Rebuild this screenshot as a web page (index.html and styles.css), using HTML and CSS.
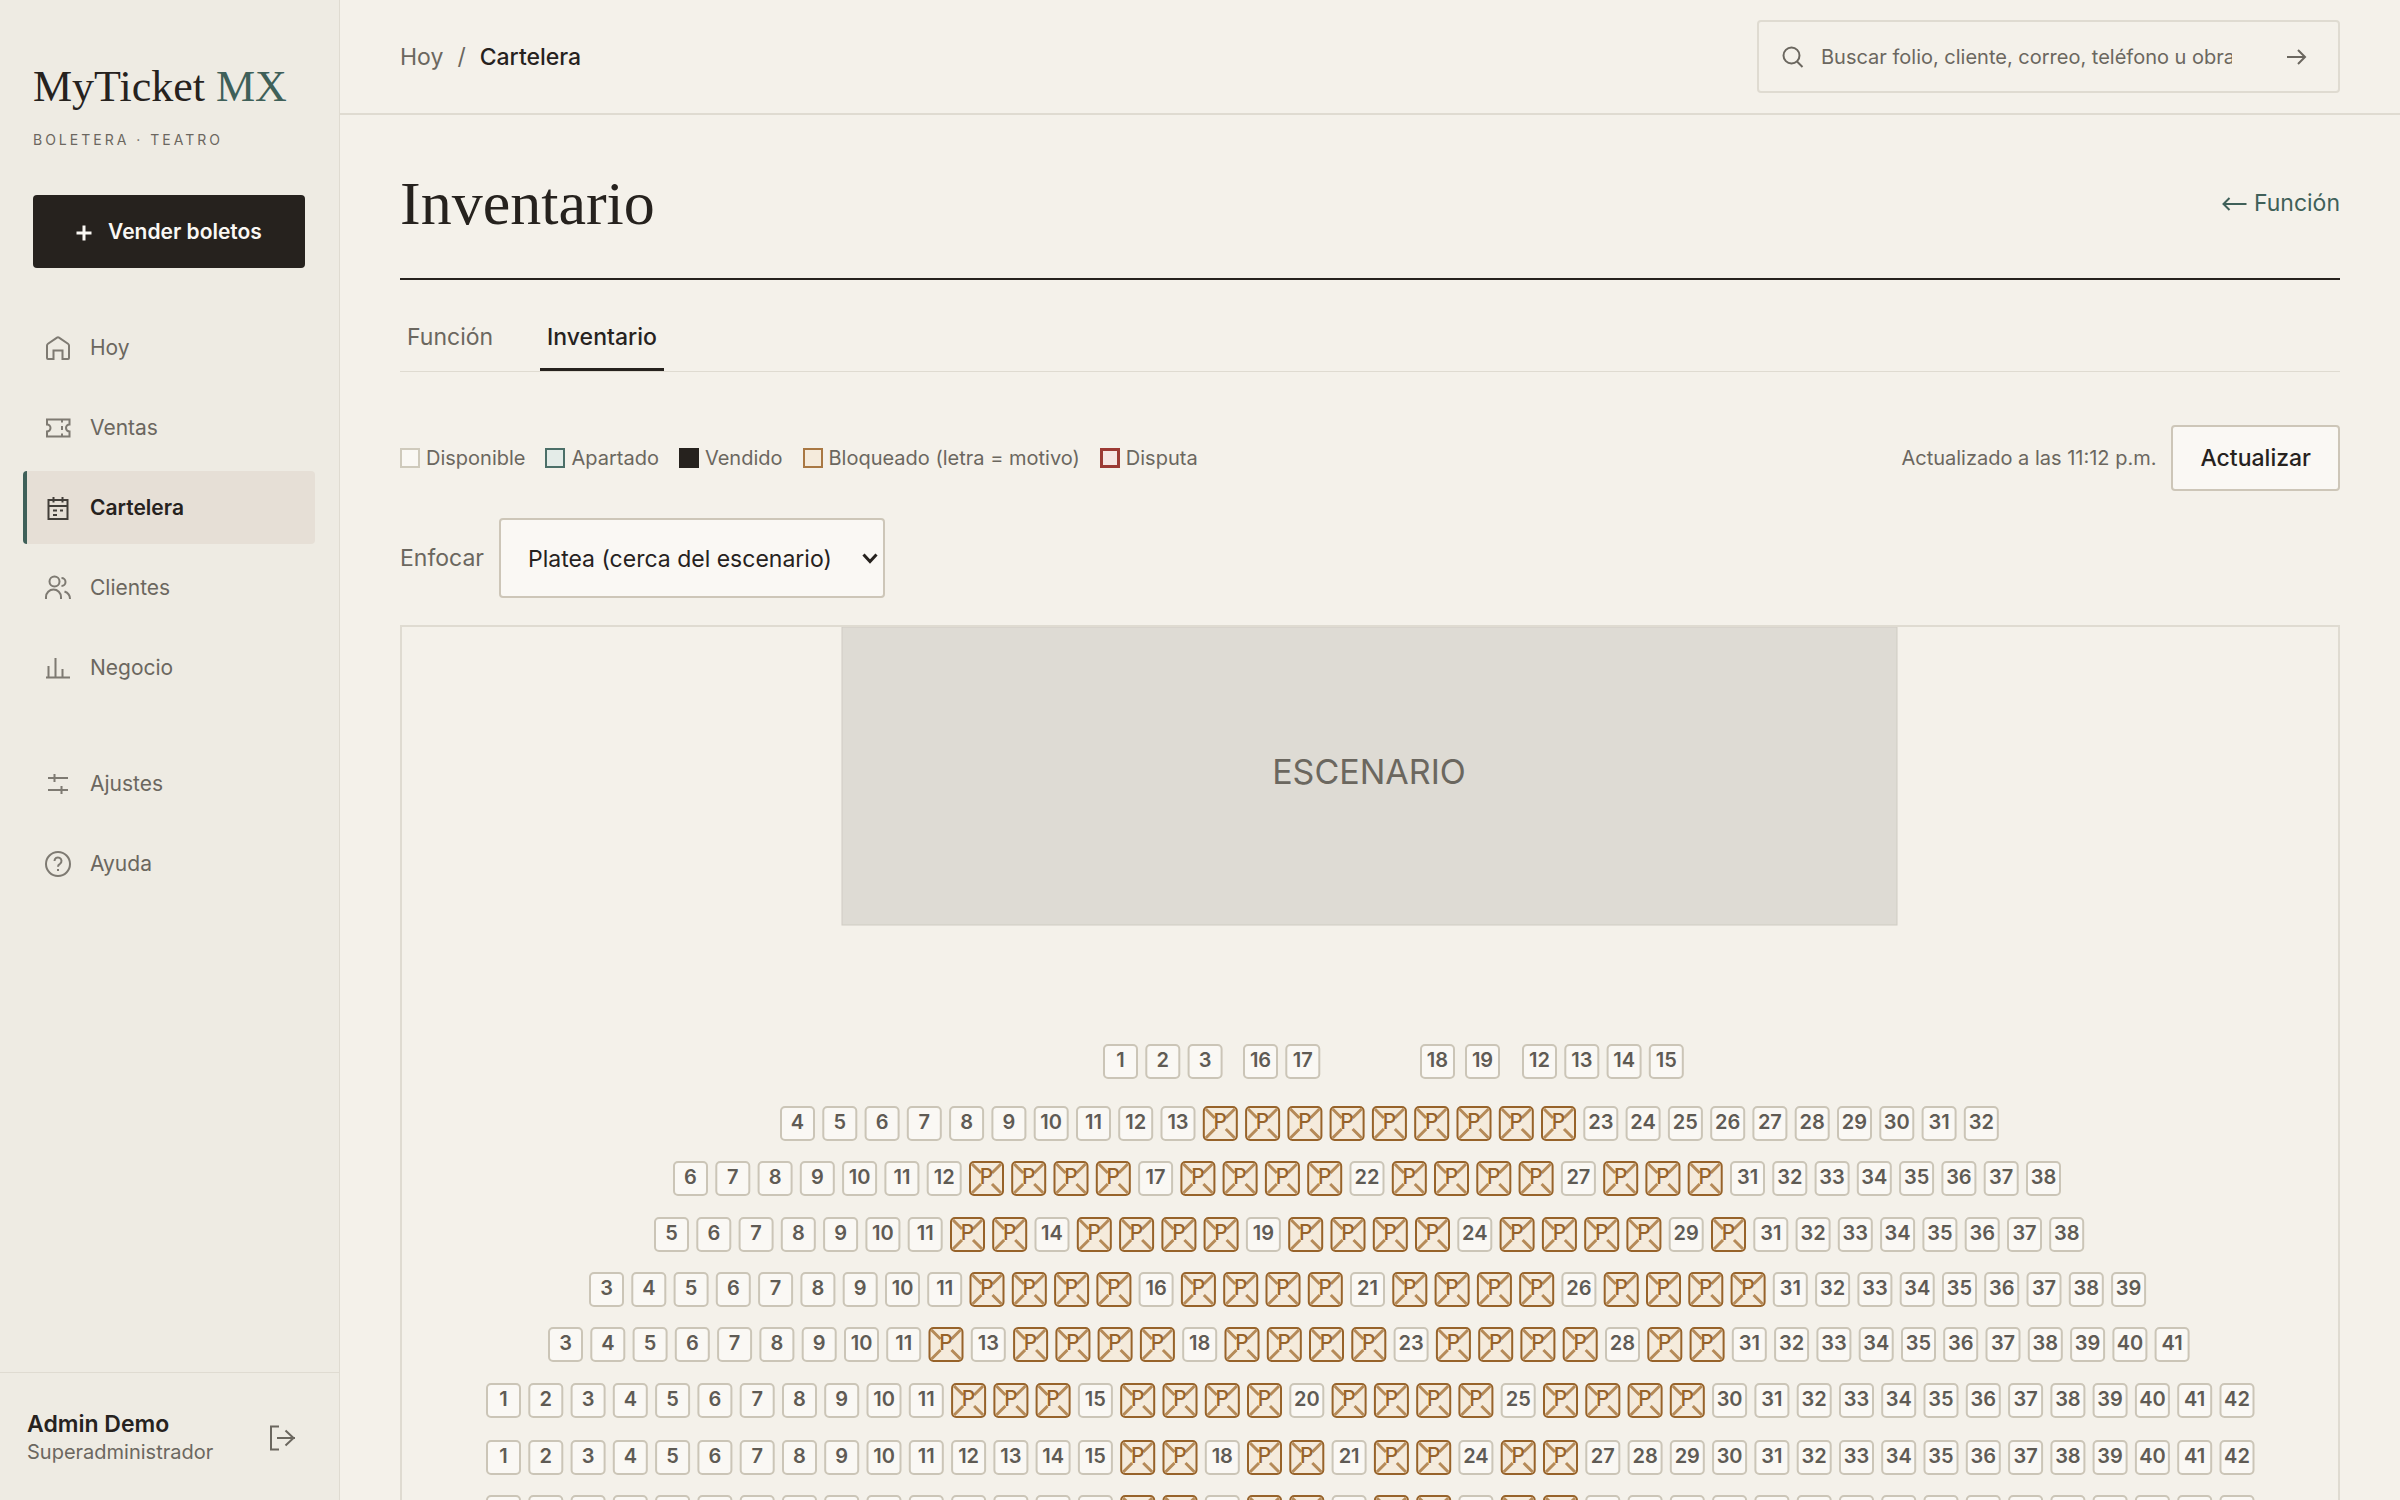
FILE: index.html
```html
<!DOCTYPE html>
<html lang="es">
<head>
<meta charset="utf-8">
<title>Inventario · MyTicket MX</title>
<meta name="viewport" content="width=device-width, initial-scale=1">
<link rel="stylesheet" href="styles.css">
</head>
<body>
<div class="app">
  <aside class="sidebar">
    <div class="brand">
      <a class="brand-name" href="#">MyTicket <span class="brand-accent">MX</span></a>
      <p class="brand-sub">BOLETERA · TEATRO</p>
    </div>
    <button class="sell" type="button">
      <svg class="sell-icon" viewBox="0 0 16 16" aria-hidden="true"><path d="M8 1.500v15M.5 9h15"/></svg>
      Vender boletos
    </button>
    <nav class="nav" aria-label="Principal">
      <a class="nav-item" href="#">
        <svg class="icon" viewBox="0 0 28 28" aria-hidden="true"><path d="M3 11.500q0-1 1-1.700L13 3.600q1-.6 2 0l9 6.200q1 .7 1 1.700V24q0 1-1 1h-5.500v-8.500h-9V25H4q-1 0-1-1z"/></svg>
        Hoy
      </a>
      <a class="nav-item" href="#">
        <svg class="icon" viewBox="0 0 28 28" aria-hidden="true"><path d="M3 5.500h22.500v5a3.500 3.500 0 0 0 0 7v5H3v-5a3.500 3.500 0 0 0 0-7z"/><path d="M18 5.500v3m0 3.500v4m0 3.500v3"/></svg>
        Ventas
      </a>
      <a class="nav-item active" href="#" aria-current="page">
        <svg class="icon" viewBox="0 0 28 28" aria-hidden="true"><path d="M4.500 6h19v19h-19zM4.500 12h19M9.500 3v5.500m9-5.500v5.500M9 16.500h4m3 0h3M9 21h4"/></svg>
        Cartelera
      </a>
      <a class="nav-item" href="#">
        <svg class="icon" viewBox="0 0 28 28" aria-hidden="true"><circle cx="10.500" cy="7.500" r="5"/><path d="M2 25v-2a7.500 7.500 0 0 1 15 0v2M17.500 4a4 4 0 0 1 0 8M20.500 17.500q5.500 2 5.500 7.500"/></svg>
        Clientes
      </a>
      <a class="nav-item" href="#">
        <svg class="icon" viewBox="0 0 28 28" aria-hidden="true"><path d="M2 23.500h24M4.500 23.500V12M11.500 23.500V4M18.500 23.500V15"/></svg>
        Negocio
      </a>
    </nav>
    <nav class="nav nav-secondary" aria-label="Soporte">
      <a class="nav-item" href="#">
        <svg class="icon" viewBox="0 0 28 28" aria-hidden="true"><path d="M4 8h20M10.500 4v8M4 20h20M17.500 16v8"/></svg>
        Ajustes
      </a>
      <a class="nav-item" href="#">
        <svg class="icon" viewBox="0 0 28 28" aria-hidden="true"><circle cx="14" cy="14" r="12"/><path d="M10.500 11a3.500 3.500 0 1 1 5.500 2.800q-2 1-2 3M14 19v2"/></svg>
        Ayuda
      </a>
    </nav>
    <div class="account">
      <div class="account-text">
        <span class="account-name">Admin Demo</span>
        <span class="account-role">Superadministrador</span>
      </div>
      <button class="icon-button" type="button" aria-label="Cerrar sesión">
        <svg class="icon icon-strong" viewBox="0 0 28 28" aria-hidden="true"><path d="M10 2.500H2v23h8M8 14h18M16.500 6.500 24.500 14l-8 7.500"/></svg>
      </button>
    </div>
  </aside>

  <div class="page">
    <header class="topbar">
      <nav class="crumbs" aria-label="Ruta">
        <a href="#">Hoy</a><span>/</span><span class="crumb-current">Cartelera</span>
      </nav>
      <form class="search">
        <svg class="search-icon" viewBox="0 0 22 22" aria-hidden="true"><circle cx="9.500" cy="9.500" r="8"/><path d="m15 15.500 5.500 5.500"/></svg>
        <input class="search-input" type="search" aria-label="Buscar" placeholder="Buscar folio, cliente, correo, teléfono u obra">
        <button class="icon-button search-go" type="submit" aria-label="Ir">
          <svg class="search-icon icon-strong" viewBox="0 0 22 22" aria-hidden="true"><path d="M2 11h18M13 4l7 7-7 7"/></svg>
        </button>
      </form>
    </header>

    <main class="content">
      <div class="title-row">
        <h1 class="title">Inventario</h1>
        <a class="back" href="#"><svg class="back-icon" viewBox="0 0 24 16" aria-hidden="true"><path d="M24 9H1M7 3 1 9l6 6"/></svg>Función</a>
      </div>
      <nav class="tabs" aria-label="Secciones">
        <a class="tab" href="#">Función</a>
        <a class="tab tab-active" href="#" aria-current="page">Inventario</a>
      </nav>
      <div class="tools">
        <ul class="legend">
          <li><i class="swatch"></i>Disponible</li>
          <li><i class="swatch held"></i>Apartado</li>
          <li><i class="swatch sold"></i>Vendido</li>
          <li><i class="swatch blocked"></i>Bloqueado (letra = motivo)</li>
          <li><i class="swatch dispute"></i>Disputa</li>
        </ul>
        <div class="refresh">
          <span>Actualizado a las 11:12 p.m.</span>
          <button class="refresh-button" type="button">Actualizar</button>
        </div>
      </div>
      <div class="focus">
        <label for="zone">Enfocar</label>
        <div class="select">
          <select id="zone"><option>Platea (cerca del escenario)</option></select>
          <svg class="select-arrow" viewBox="0 0 16 12" aria-hidden="true"><path d="m1.500 2.500 6.500 7 6.500-7"/></svg>
        </div>
      </div>
      <section class="map" aria-label="Mapa de asientos">
        <svg id="seats" class="map-svg" viewBox="0 0 1936 960">
          <rect class="stage" x="440" y="0" width="1055" height="298"/>
          <text class="stage-label" x="967" y="157">ESCENARIO</text>
        </svg>
      </section>
    </main>
  </div>
</div>
<script src="seats.js"></script>
</body>
</html>
```
FILE: styles.css
```css
:root {
  --paper: #f4f1ea;
  --side: #eeebe3;
  --card: #faf8f4;
  --ink: #26221e;
  --muted: #6b675f;
  --line: #dfdbd1;
  --edge: #c8c1b3;
  --green: #3f6059;
  --amber: #97632a;
}

* { box-sizing: border-box; }

body {
  margin: 0;
  background: var(--paper);
  color: var(--ink);
  font: 400 23px/28px Inter, "Liberation Sans", sans-serif;
}

a { color: inherit; text-decoration: none; }
button, input, select { font: inherit; color: inherit; }
button { cursor: pointer; }
svg { flex: none; fill: none; stroke: currentColor; stroke-width: 2; }

.app {
  display: grid;
  grid-template-columns: 340px 1fr;
  height: 100vh;
  overflow: hidden;
}

.sidebar {
  display: flex;
  flex-direction: column;
  background: var(--side);
  border-right: 1px solid var(--line);
  font-size: 21px;
}

.brand { padding: 59px 33px 0; }
.brand-name {
  display: block;
  font: 400 44px/56px "Liberation Serif", serif;
}
.brand-accent { color: var(--green); }
.brand-sub {
  margin: 15px 0 0;
  color: var(--muted);
  font-size: 14px;
  line-height: 20px;
  letter-spacing: 3px;
}

.sell {
  display: flex;
  align-items: center;
  justify-content: center;
  gap: 16px;
  height: 73px;
  margin: 45px 34px 0 33px;
  border: 0;
  border-radius: 4px;
  background: var(--ink);
  color: var(--card);
  font-weight: 600;
}
.sell-icon { width: 16px; height: 16px; overflow: visible; stroke-width: 3; }

.nav {
  display: flex;
  flex-direction: column;
  gap: 7px;
  padding: 43px 24px 0 23px;
}
.nav-item {
  display: flex;
  align-items: center;
  gap: 18px;
  height: 73px;
  padding-left: 17px;
  border-left: 4px solid transparent;
  border-radius: 4px;
  color: var(--muted);
}
.nav-item.active {
  background: #e6dfd6;
  border-color: var(--green);
  color: var(--ink);
  font-weight: 600;
}
.icon { width: 28px; height: 28px; opacity: .85; }
.icon-strong { opacity: 1; }

.account {
  display: flex;
  align-items: center;
  justify-content: space-between;
  margin-top: auto;
  padding: 37px 42px 34px 27px;
  border-top: 1px solid var(--line);
}
.account-text { display: flex; flex-direction: column; }
.account-name { font-size: 23px; font-weight: 600; }
.account-role { color: var(--muted); font-size: 20px; }
.icon-button {
  display: flex;
  padding: 0;
  border: 0;
  background: none;
  color: var(--muted);
}

.page { min-width: 0; overflow: hidden; }

.topbar {
  display: flex;
  align-items: center;
  justify-content: space-between;
  height: 115px;
  padding: 0 60px;
  border-bottom: 2px solid var(--line);
}
.crumbs { display: flex; gap: 14px; color: var(--muted); }
.crumb-current { color: var(--ink); font-weight: 500; }

.search {
  display: flex;
  align-items: center;
  width: 583px;
  height: 73px;
  padding: 0 31px 0 23px;
  border: 2px solid var(--line);
  border-radius: 4px;
  color: var(--muted);
}
.search-icon { width: 22px; height: 22px; }
.search-input {
  flex: 1;
  min-width: 0;
  margin: 0 53px 0 17px;
  padding: 0;
  border: 0;
  outline: 0;
  appearance: none;
  background: none;
  font-size: 20px;
}
.search-input::-webkit-search-cancel-button { display: none; }
.search-input::placeholder { color: var(--muted); opacity: 1; }

.content { padding: 0 60px; }

.title-row {
  display: flex;
  align-items: center;
  justify-content: space-between;
  height: 165px;
  padding-top: 13px;
  border-bottom: 2px solid var(--ink);
}
.title { margin: 0; font: 400 62px/76px "Liberation Serif", serif; }
.back { display: flex; align-items: center; gap: 7px; color: var(--green); }
.back-icon { width: 25px; height: 16px; }

.tabs {
  display: flex;
  gap: 40px;
  padding-top: 34px;
  border-bottom: 1px solid var(--line);
}
.tab {
  height: 57px;
  padding: 9px 7px 0;
  border-bottom: 3px solid transparent;
  color: var(--muted);
}
.tab-active { border-color: var(--ink); color: var(--ink); font-weight: 500; }

.tools {
  display: flex;
  align-items: center;
  justify-content: space-between;
  padding-top: 53px;
  color: var(--muted);
  font-size: 20px;
}
.legend {
  display: flex;
  gap: 20px;
  margin: 0;
  padding: 0;
  list-style: none;
}
.legend li { display: flex; align-items: center; gap: 6px; }
.swatch {
  width: 20px;
  height: 20px;
  border: 2px solid #cfcabc;
  background: var(--card);
}
.swatch.held { border-color: #4b6f68; background: #e4ece8; }
.swatch.sold { border-color: var(--ink); background: var(--ink); }
.swatch.blocked { border-color: #a97843; background: #f5ebdc; }
.swatch.dispute { border: 3px solid #9c3a34; background: #f6e6e3; }

.refresh { display: flex; align-items: center; gap: 15px; }
.refresh-button {
  height: 66px;
  padding: 0 27px;
  border: 2px solid #cdc6b8;
  border-radius: 4px;
  background: var(--card);
  color: var(--ink);
  font-size: 23px;
  font-weight: 500;
}

.focus {
  display: flex;
  align-items: center;
  gap: 15px;
  padding: 27px 0;
  color: var(--muted);
}
.select { display: grid; align-items: center; color: var(--ink); }
.select > * { grid-area: 1 / 1; }
.select select {
  appearance: none;
  height: 80px;
  padding: 2px 51px 0 27px;
  border: 2px solid #cdc6b8;
  border-radius: 4px;
  background: var(--card);
}
.select-arrow {
  justify-self: end;
  width: 16px;
  height: 12px;
  margin-right: 7px;
  stroke-width: 3;
  pointer-events: none;
}

.map { border: 2px solid var(--line); }
.map-svg { display: block; width: 100%; stroke: none; }
.map-svg text { text-anchor: middle; }
.stage { fill: #dedbd4; stroke: #cfccc3; stroke-width: 1; }
.stage-label { fill: var(--muted); font-size: 34px; }
.seat rect { fill: var(--card); stroke: #cbc5b7; stroke-width: 2; }
.seat text { fill: #5f5b54; font-size: 20px; font-weight: 600; }
.seat.hold rect { fill: #f5ebdc; stroke: var(--amber); }
.seat.hold path { stroke: #b58a58; stroke-width: 3; }
.seat.hold text { fill: var(--amber); font-size: 21px; font-weight: 500; }
```
FILE: seats.js
```js
// Seat runs per row: y, then [x of first seat, first number, last number].
const PITCH = 42.28;
const SIZE = 33;
const rows = [
  { y: 418, runs: [[702, 1, 3], [842, 16, 17], [1019, 18, 18], [1064, 19, 19], [1121, 12, 15]], held: [] },
  { y: 480, runs: [[379, 4, 32]], held: [[14, 22]] },
  { y: 535, runs: [[272, 6, 38]], held: [[13, 16], [18, 21], [23, 26], [28, 30]] },
  { y: 591, runs: [[253, 5, 38]], held: [[12, 13], [15, 18], [20, 23], [25, 28], [30, 30]] },
  { y: 646, runs: [[188, 3, 39]], held: [[12, 15], [17, 20], [22, 25], [27, 30]] },
  { y: 701, runs: [[147, 3, 41]], held: [[12, 12], [14, 17], [19, 22], [24, 27], [29, 30]] },
  { y: 757, runs: [[85, 1, 42]], held: [[12, 14], [16, 19], [21, 24], [26, 29]] },
  { y: 814, runs: [[85, 1, 42]], held: [[16, 17], [19, 20], [22, 23], [25, 26]] },
  { y: 869, runs: [[85, 1, 42]], held: [[16, 17], [19, 20], [22, 23], [25, 26]] }
];

const parts = [];
for (const { y, runs, held } of rows) {
  for (const [start, first, last] of runs) {
    for (let n = first; n <= last; n++) {
      const x = start + (n - first) * PITCH;
      const hold = held.some(([a, b]) => n >= a && n <= b);
      const cross = hold
        ? '<path d="M2 2 11 11M31 2 22 11M2 31 11 22M31 31 22 22"/>'
        : '';
      parts.push(
        `<g class="seat${hold ? ' hold' : ''}" transform="translate(${x.toFixed(1)} ${y})">` +
        `<rect width="${SIZE}" height="${SIZE}" rx="4"/>${cross}` +
        `<text x="16.500" y="22">${hold ? 'P' : n}</text></g>`
      );
    }
  }
}
document.getElementById('seats').insertAdjacentHTML('beforeend', parts.join(''));
```
